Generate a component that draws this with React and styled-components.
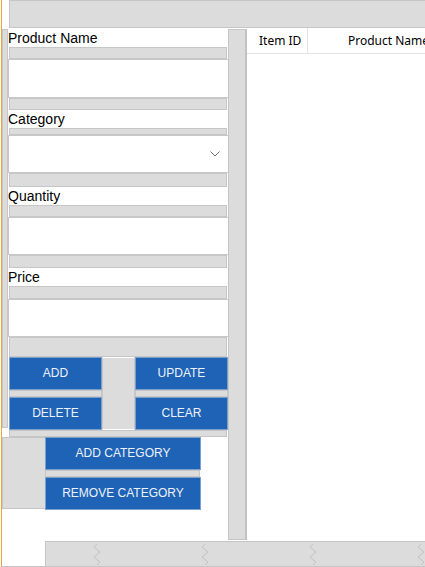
import React from "react";
import styled, { createGlobalStyle } from "styled-components";

const Global = createGlobalStyle`
  html, body { margin: 0; padding: 0; background: #fff; }
  body { font-family: "Liberation Sans", Arial, sans-serif; }
  * { box-sizing: border-box; }
`;

const GRAY = "#dcdcdc";
const EDGE = "#c6c6c6";

const Root = styled.div`
  width: 424px;
  height: 567px;
  margin-left: 1px;
  border-left: 1px solid #f2a33a;
  border-bottom: 1px solid ${EDGE};
  display: flex;
  flex-direction: column;
  overflow: hidden;
  background: #fff;
`;

const TopBar = styled.div`
  height: 28px;
  margin-left: 7px;
  flex-shrink: 0;
  background: ${GRAY};
  border: 1px solid ${EDGE};
  border-right: none;
`;

const Middle = styled.div`
  flex: 1;
  min-height: 0;
  display: flex;
`;

const LeftCol = styled.div`
  width: 226px;
  flex-shrink: 0;
  display: flex;
  flex-direction: column;
`;

const FormRow = styled.div`
  display: flex;
`;

const Strip = styled.div`
  width: 6px;
  margin-top: 1px;
  height: 399px;
  background: ${GRAY};
  border: 1px solid ${EDGE};
`;

const Form = styled.div`
  width: 220px;
  margin-top: 1px;
  display: flex;
  flex-direction: column;
`;

const Label = styled.div`
  height: ${(p) => p.$h || 18}px;
  line-height: 19px;
  font-size: 14px;
  color: #000;
  white-space: nowrap;
`;

const Bar = styled.div`
  height: ${(p) => p.$h}px;
  margin: 0 1px;
  background: ${GRAY};
  border: 1px solid ${EDGE};
  flex-shrink: 0;
`;

const Field = styled.div`
  height: ${(p) => p.$h || 38}px;
  width: 221px;
  background: #fff;
  border: 1px solid #c8c8c8;
  display: flex;
  align-items: center;
  justify-content: flex-end;
  padding-right: 8px;
`;

const ButtonGrid = styled.div`
  margin-left: 1px;
  display: grid;
  grid-template-columns: 93px 33px 93px;
  grid-template-rows: 33px 7px 33px;
  height: 73px;
`;

const MidGap = styled.div`
  grid-column: 2;
  grid-row: 1 / span 3;
  background: ${GRAY};
  border: 1px solid ${EDGE};
  border-top-color: #fff;
  border-bottom-color: #fff;
`;

const GridBar = styled.div`
  grid-column: ${(p) => p.$col};
  grid-row: 2;
  background: ${GRAY};
  border: 1px solid ${EDGE};
`;

const Button = styled.button`
  grid-column: ${(p) => p.$col || "auto"};
  grid-row: ${(p) => p.$row || "auto"};
  height: 33px;
  margin: 0;
  padding: 0 0 2px;
  background: #1e63b6;
  border: 1px solid #7d9fcb;
  color: #eef2f8;
  font-family: "Liberation Sans", Arial, sans-serif;
  font-size: 12px;
  text-transform: uppercase;
  cursor: pointer;
`;

const CategoryRow = styled.div`
  display: flex;
`;

const CatBox = styled.div`
  width: 43px;
  height: 72px;
  background: ${GRAY};
  border: 1px solid ${EDGE};
  border-right: none;
`;

const CatButtons = styled.div`
  width: 156px;
  display: flex;
  flex-direction: column;
`;

const CatBar = styled.div`
  height: 7px;
  margin-right: 1px;
  background: ${GRAY};
  border: 1px solid ${EDGE};
`;

const Divider = styled.div`
  width: 19px;
  flex-shrink: 0;
  margin-top: 1px;
  height: 511px;
  background: ${GRAY};
  border: 1px solid ${EDGE};
  border-right: 2px solid #c2c2c2;
`;

const Table = styled.div`
  flex: 1;
  min-width: 0;
  overflow: hidden;
  background: #fff;
`;

const HeaderRow = styled.div`
  display: flex;
  height: 26px;
  border-bottom: 1px solid #e3e3e3;
  white-space: nowrap;
`;

const HeaderCell = styled.div`
  width: ${(p) => p.$w}px;
  flex-shrink: 0;
  padding-left: ${(p) => p.$pad}px;
  font-family: "Noto Sans", "DejaVu Sans", sans-serif;
  font-size: 12px;
  line-height: 25px;
  color: #000;
  border-right: 1px solid #e3e3e3;
`;

const BottomBar = styled.div`
  height: 25px;
  margin-left: 43px;
  flex-shrink: 0;
  background: ${GRAY};
  border-top: 1px solid ${EDGE};
  border-left: 1px solid ${EDGE};
  display: flex;
  align-items: center;
  padding-left: 47px;
  gap: 100px;
`;

const Zig = () => (
  <svg width="8" height="21" viewBox="0 0 8 21">
    <polyline
      points="4,0 1,3 7,8 1,13 7,18 4,21"
      fill="none"
      stroke="#c2c2c2"
      strokeWidth="1"
    />
  </svg>
);

const Chevron = () => (
  <svg width="10" height="6" viewBox="0 0 10 6">
    <polyline points="0.5,0.5 5,5 9.5,0.5" fill="none" stroke="#707070" strokeWidth="1" />
  </svg>
);

export default function App() {
  return (
    <>
      <Global />
      <Root>
        <TopBar />
        <Middle>
          <LeftCol>
            <FormRow>
              <Strip />
              <Form>
                <Label>Product Name</Label>
                <Bar $h={12} />
                <Field $h={39} />
                <Bar $h={12} />
                <Label>Category</Label>
                <Bar $h={7} />
                <Field $h={38}>
                  <Chevron />
                </Field>
                <Bar $h={14} />
                <Label>Quantity</Label>
                <Bar $h={12} />
                <Field $h={38} />
                <Bar $h={13} />
                <Label>Price</Label>
                <Bar $h={13} />
                <Field $h={38} />
                <Bar $h={20} />
                <ButtonGrid>
                  <Button $col={1} $row={1}>Add</Button>
                  <MidGap />
                  <Button $col={3} $row={1}>Update</Button>
                  <GridBar $col={1} />
                  <GridBar $col={3} />
                  <Button $col={1} $row={3}>Delete</Button>
                  <Button $col={3} $row={3}>Clear</Button>
                </ButtonGrid>
                <Bar $h={7} />
              </Form>
            </FormRow>
            <CategoryRow>
              <CatBox />
              <CatButtons>
                <Button>Add Category</Button>
                <CatBar />
                <Button>Remove Category</Button>
              </CatButtons>
            </CategoryRow>
          </LeftCol>
          <Divider />
          <Table>
            <HeaderRow>
              <HeaderCell $w={61} $pad={12}>Item ID</HeaderCell>
              <HeaderCell $w={170} $pad={40}>Product Name</HeaderCell>
            </HeaderRow>
          </Table>
        </Middle>
        <BottomBar>
          <Zig />
          <Zig />
          <Zig />
          <Zig />
        </BottomBar>
      </Root>
    </>
  );
}
